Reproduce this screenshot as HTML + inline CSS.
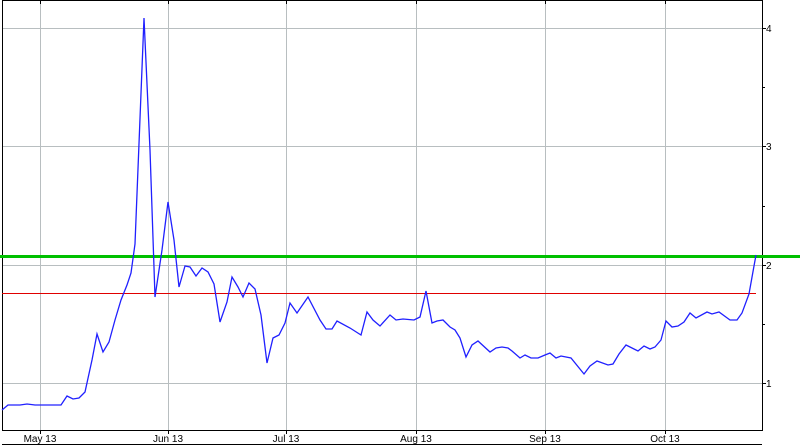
<!DOCTYPE html>
<html><head><style>html,body{margin:0;padding:0;background:#fff;}svg{display:block}</style></head>
<body>
<svg width="800" height="446" viewBox="0 0 800 446" xmlns="http://www.w3.org/2000/svg" font-family="Liberation Sans, sans-serif" font-size="10">
<g stroke="#b8bec0" stroke-width="1">
<line x1="2" y1="28.5" x2="762" y2="28.5"/><line x1="2" y1="146.5" x2="762" y2="146.5"/><line x1="2" y1="265.5" x2="762" y2="265.5"/><line x1="2" y1="383.5" x2="762" y2="383.5"/>
<line x1="40.5" y1="0" x2="40.5" y2="430"/><line x1="168.5" y1="0" x2="168.5" y2="430"/><line x1="286.5" y1="0" x2="286.5" y2="430"/><line x1="416.5" y1="0" x2="416.5" y2="430"/><line x1="545.5" y1="0" x2="545.5" y2="430"/><line x1="665.5" y1="0" x2="665.5" y2="430"/>
</g>
<g stroke="#000" stroke-width="1" fill="none">
<path d="M2.5 0.5H762.5V430.5H2.5Z"/>
<line x1="2" y1="444.5" x2="762" y2="444.5"/>
<path d="M762 28.5h4M762 87.5h3M762 146.5h4M762 206.5h3M762 265.5h4M762 324.5h3M762 383.5h4"/>
<path d="M40.5 430v4M168.5 430v4M286.5 430v4M416.5 430v4M545.5 430v4M665.5 430v4M40.5 0v4M168.5 0v4M286.5 0v4M416.5 0v4M545.5 0v4M665.5 0v4"/>
</g>
<line x1="2" y1="293.5" x2="756" y2="293.5" stroke="#e00000" stroke-width="1"/>
<line x1="0" y1="256.5" x2="800" y2="256.5" stroke="#00c000" stroke-width="3"/>
<polyline fill="none" stroke="#2020ff" stroke-width="1.3" points="2,410 8,405 20,405 27,404 35,405 61,405 67,396 73,399 79,398 85,392 92,360 97,334 103,352 109,342 115,320 121,300 127,285 131,273 135,244 144,18 150,150 155,297 162,250 168,202 174,240 179,287 185,266 190,267 196,276 202,268 208,272 214,284 220,322 227,302 232,277 238,287 243,297 249,283 255,289 261,315 267,363 273,338 279,335 285,323 290,303 297,313 308,297 320,320 326,329 332,329 337,321 350,328 361,335 367,312 373,320 380,326 390,315 396,320 403,319 414,320 420,317 426,291 432,323 437,321 443,320 450,327 455,330 460,338 466,357 472,345 478,341 490,352 496,348 502,347 508,348 512,351 520,358 525,355 531,358 538,358 545,355 550,353 556,358 561,356 571,358 584,374 590,366 597,361 608,365 613,364 619,354 626,345 638,351 644,346 650,349 655,347 661,340 666,321 672,327 678,326 684,322 690,313 696,318 707,312 712,314 719,312 730,320 737,320 742,313 749,294 754,266 756,255"/>
<g fill="#000">
<text x="766" y="32">4</text><text x="766" y="150">3</text><text x="766" y="269">2</text><text x="766" y="387">1</text>
<g text-anchor="middle"><text x="40" y="442">May 13</text><text x="168" y="442">Jun 13</text><text x="286" y="442">Jul 13</text><text x="416" y="442">Aug 13</text><text x="545" y="442">Sep 13</text><text x="665" y="442">Oct 13</text></g>
</g>
</svg>
</body></html>
